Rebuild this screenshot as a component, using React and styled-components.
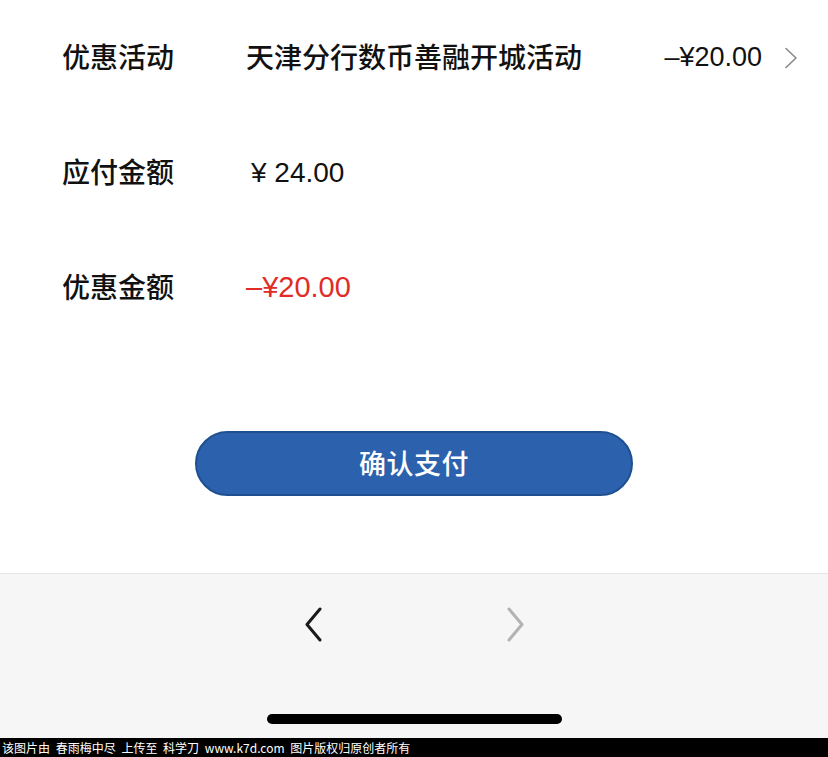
import React from 'react';
import styled, { createGlobalStyle } from 'styled-components';

const GlobalStyle = createGlobalStyle`
  html, body {
    margin: 0;
    padding: 0;
    background: #fff;
  }
  body {
    font-family: "Liberation Sans", "Noto Sans CJK SC", sans-serif;
    -webkit-font-smoothing: antialiased;
  }
`;

const Page = styled.div`
  width: 828px;
  height: 757px;
  display: flex;
  flex-direction: column;
  overflow: hidden;
`;

const Main = styled.main`
  height: 573px;
  display: flex;
  flex-direction: column;
  background: #fff;
`;

const Row = styled.div`
  height: 115px;
  display: flex;
  align-items: center;
  padding: 0 30px 0 62px;
  font-size: 28px;
  color: #111;
`;

const Label = styled.span`
  width: 184px;
  flex-shrink: 0;
  padding-bottom: 4px;
  font-family: "Noto Sans CJK SC", sans-serif;
  font-weight: 500;
`;

const Value = styled.span`
  flex: 1;
  color: ${(p) => (p.$red ? '#e02b27' : '#111')};
  font-family: ${(p) => (p.$cjk ? '"Noto Sans CJK SC", sans-serif' : '"Liberation Sans", "Noto Sans CJK SC", sans-serif')};
  font-weight: ${(p) => (p.$cjk ? 500 : 400)};
  font-size: ${(p) => (p.$red ? '29px' : '28px')};
  padding-left: ${(p) => p.$indent || 0}px;
  padding-bottom: ${(p) => (p.$cjk ? 4 : 0)}px;
`;

const Discount = styled.span`
  font-size: 27px;
  margin-right: 22px;
`;

const Chevron = styled.svg`
  display: block;
  fill: none;
  stroke: ${(p) => p.$color};
  stroke-width: ${(p) => p.$stroke};
  stroke-linecap: round;
  stroke-linejoin: round;
`;

const ButtonWrap = styled.div`
  display: flex;
  justify-content: center;
  margin-top: 86px;
`;

const PayButton = styled.button`
  width: 438px;
  height: 65px;
  border-radius: 33px;
  border: 2px solid #1e4f90;
  background: #2c62ad;
  color: #fff;
  font-family: "Noto Sans CJK SC", sans-serif;
  font-size: 27px;
  font-weight: 500;
  letter-spacing: 0.5px;
  padding-bottom: 3px;
  cursor: pointer;
`;

const Footer = styled.footer`
  height: 164px;
  background: #f6f6f6;
  border-top: 1px solid #e4e4e4;
  display: flex;
  flex-direction: column;
  align-items: center;
`;

const NavRow = styled.div`
  display: flex;
  gap: 183px;
  margin-top: 33px;
  margin-left: 1px;
`;

const HomeBar = styled.div`
  width: 295px;
  height: 10px;
  border-radius: 5px;
  background: #000;
  margin-top: auto;
  margin-bottom: 14px;
`;

const Watermark = styled.div`
  height: 19px;
  background: #000;
  color: #fff;
  font-family: "Noto Sans CJK SC", sans-serif;
  font-size: 12px;
  line-height: 19px;
  padding-left: 2px;
  word-spacing: 3px;
  white-space: nowrap;
`;

const App = () => (
  <Page>
    <GlobalStyle />
    <Main>
      <Row>
        <Label>优惠活动</Label>
        <Value $cjk>天津分行数币善融开城活动</Value>
        <Discount>–¥20.00</Discount>
        <Chevron width="14" height="22" viewBox="0 0 14 22" $color="#8a8a8a" $stroke="1.6">
          <path d="M2 1.5 L12 11 L2 20.5" />
        </Chevron>
      </Row>
      <Row>
        <Label>应付金额</Label>
        <Value $indent={5}>¥ 24.00</Value>
      </Row>
      <Row>
        <Label>优惠金额</Label>
        <Value $red>–¥20.00</Value>
      </Row>
      <ButtonWrap>
        <PayButton>确认支付</PayButton>
      </ButtonWrap>
    </Main>
    <Footer>
      <NavRow>
        <Chevron width="20" height="35" viewBox="0 0 20 35" $color="#1a1a1a" $stroke="3">
          <path d="M17 2 L4 17.5 L17 33" />
        </Chevron>
        <Chevron width="20" height="35" viewBox="0 0 20 35" $color="#b3b3b3" $stroke="3">
          <path d="M3 2 L16 17.5 L3 33" />
        </Chevron>
      </NavRow>
      <HomeBar />
    </Footer>
    <Watermark>该图片由 春雨梅中尽 上传至 科学刀 www.k7d.com 图片版权归原创者所有</Watermark>
  </Page>
);

export default App;
